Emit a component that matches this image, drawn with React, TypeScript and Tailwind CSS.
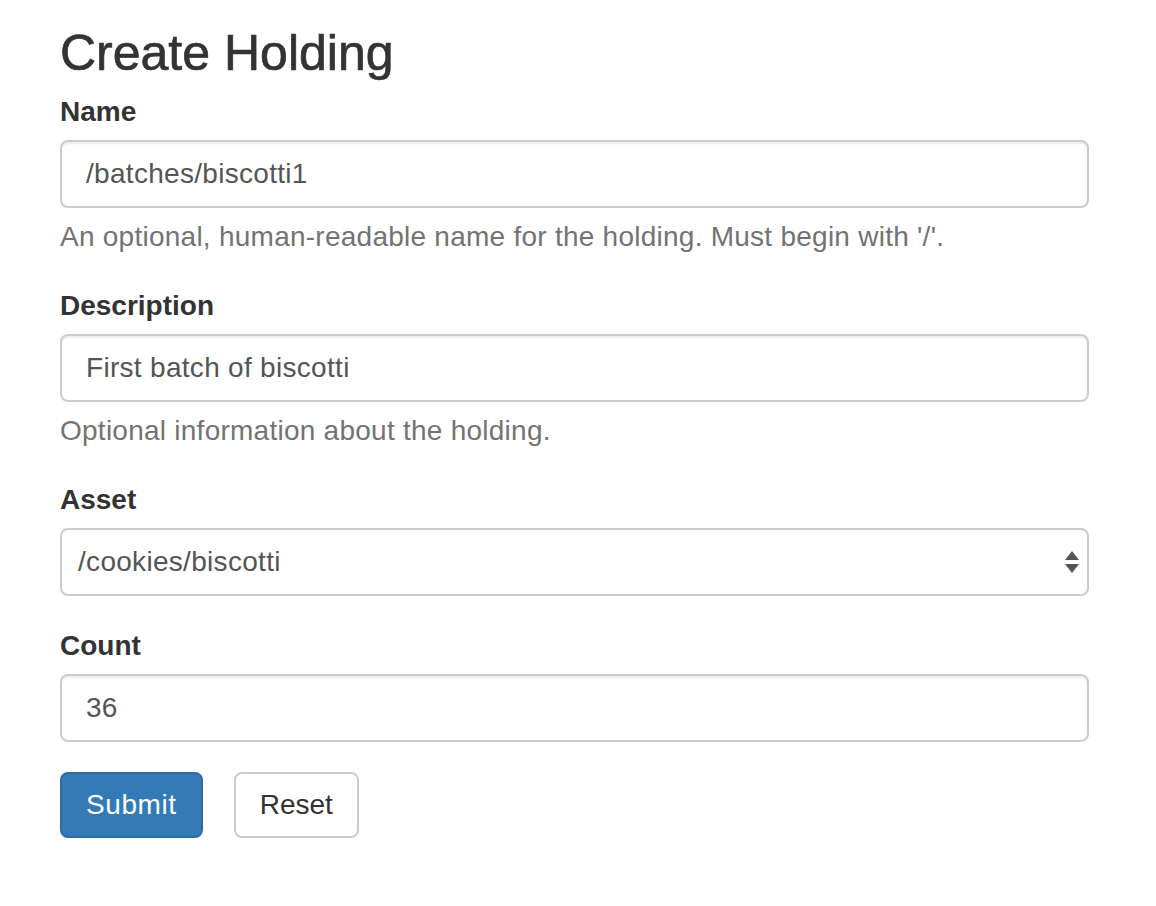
export default function App() {
  const inputCls =
    'block w-full h-[68px] px-[24px] border-2 border-[#cccccc] rounded-[8px] bg-white text-[28px] tracking-[0.3px] text-[#555555] outline-none shadow-[inset_0_2px_2px_rgba(0,0,0,0.075)]'
  const helpCls = 'mt-[9px] text-[28px] leading-[40px] tracking-[0.25px] text-[#737373]'
  const labelCls = 'block mb-[8px] text-[28px] leading-[40px] font-bold'

  return (
    <div className="min-h-screen bg-white font-['Liberation_Sans',Arial,sans-serif] text-[#333333]">
      <div className="w-[1029px] ml-[60px]">
        <h2 className="pt-[26px] mb-[11px] text-[50px] leading-[55px] font-medium [-webkit-text-stroke:0.7px_#333333]">
          Create Holding
        </h2>

        <form onSubmit={(e) => e.preventDefault()}>
          {/* Name */}
          <div className="mb-[29px]">
            <label className={labelCls}>Name</label>
            <input className={inputCls} defaultValue="/batches/biscotti1" />
            <p className={helpCls}>An optional, human-readable name for the holding. Must begin with '/'.</p>
          </div>

          {/* Description */}
          <div className="mb-[29px]">
            <label className={labelCls}>Description</label>
            <input className={inputCls} defaultValue="First batch of biscotti" />
            <p className={helpCls}>Optional information about the holding.</p>
          </div>

          {/* Asset */}
          <div className="mb-[30px]">
            <label className={labelCls}>Asset</label>
            <div className="flex items-center justify-between h-[68px] pl-[16px] pr-[8px] border-2 border-[#cccccc] rounded-[8px] bg-white text-[28px] tracking-[0.3px] text-[#555555]">
              <span>/cookies/biscotti</span>
              <svg width="14" height="22" viewBox="0 0 14 22">
                <path d="M7 0 L14 9 L0 9 Z" fill="#555555" />
                <path d="M0 13 L14 13 L7 22 Z" fill="#555555" />
              </svg>
            </div>
          </div>

          {/* Count */}
          <div className="mb-[30px]">
            <label className={labelCls}>Count</label>
            <input className={inputCls} defaultValue="36" />
          </div>

          <div className="flex gap-[31px]">
            <button
              type="submit"
              className="h-[66px] px-[24px] rounded-[8px] border-2 border-[#2e6da4] bg-[#337ab7] text-white text-[28px] leading-[40px] tracking-[0.6px]"
            >
              Submit
            </button>
            <button
              type="reset"
              className="h-[66px] px-[24px] rounded-[8px] border-2 border-[#cccccc] bg-white text-[#333333] text-[28px] leading-[40px]"
            >
              Reset
            </button>
          </div>
        </form>
      </div>
    </div>
  )
}
